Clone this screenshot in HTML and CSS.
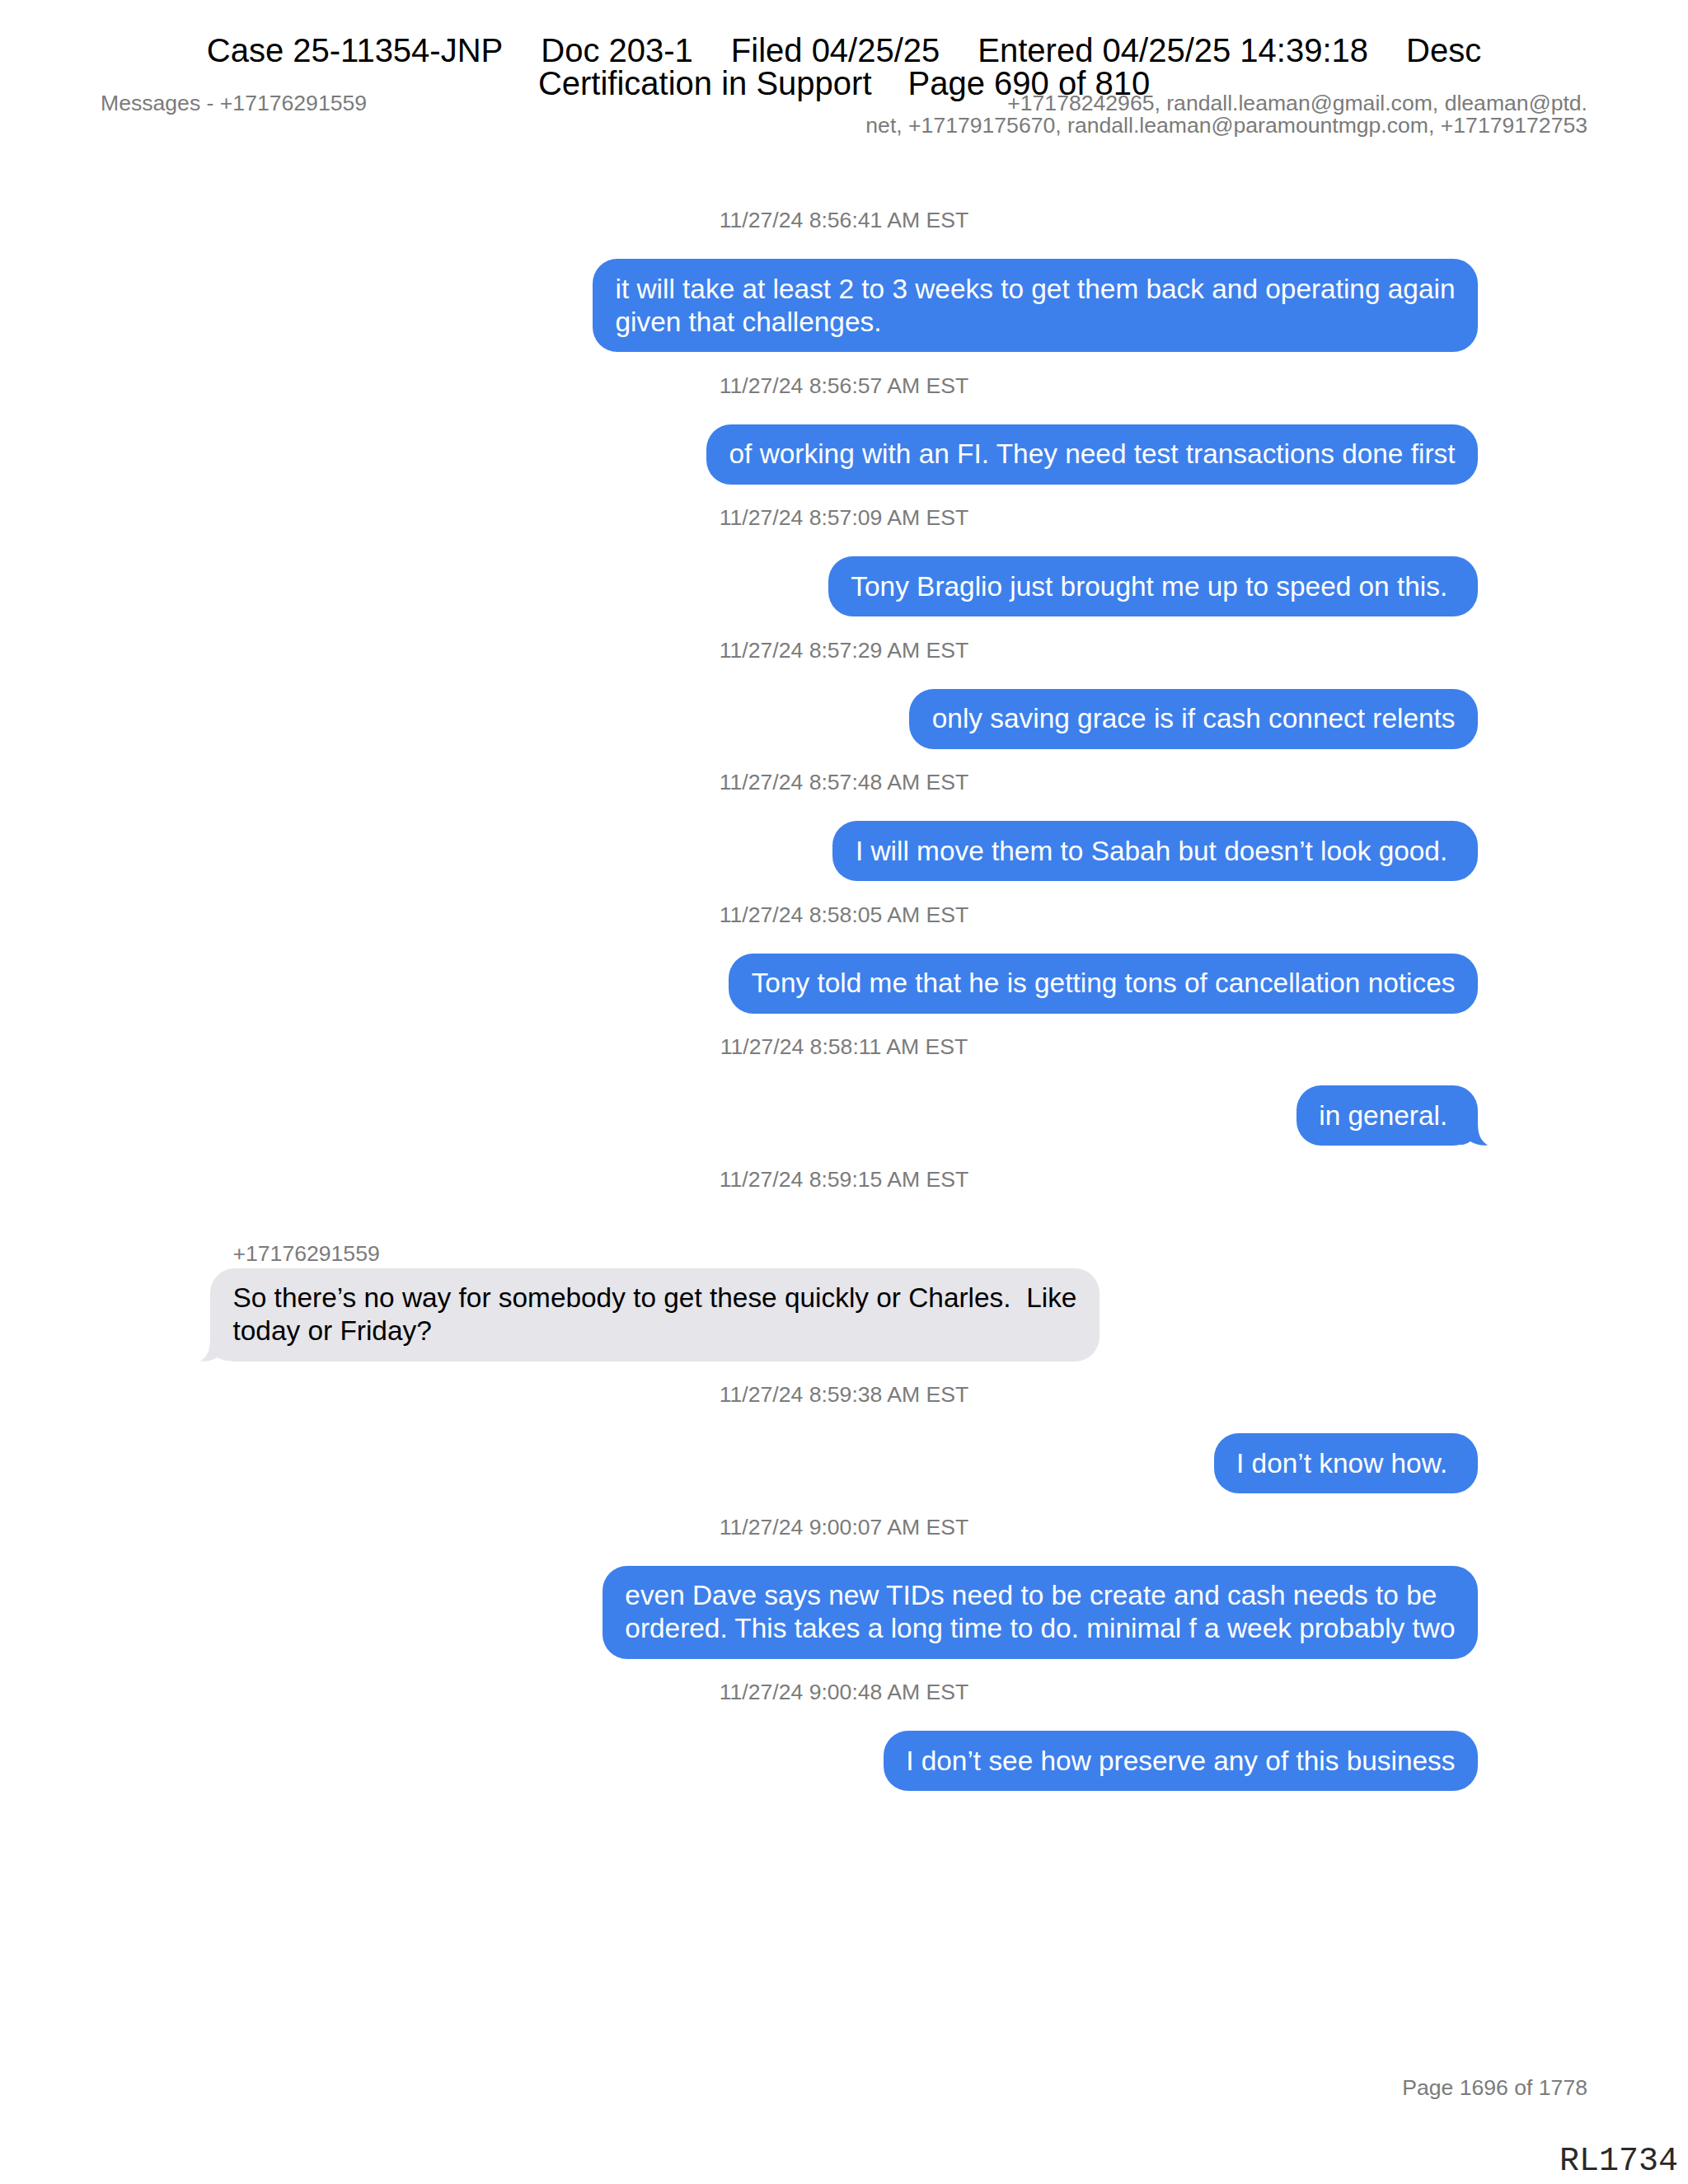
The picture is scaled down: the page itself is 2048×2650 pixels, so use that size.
FILE: index.html
```html
<!DOCTYPE html>
<html lang="en">
<head>
<meta charset="utf-8">
<title>Messages - +17176291559</title>
<link rel="stylesheet" href="styles.css">
</head>
<body>
<div class="page">
  <div class="stamp">
    <div class="stamp-line"><span>Case 25-11354-JNP</span><span class="sg">Doc 203-1</span><span class="sg">Filed 04/25/25</span><span class="sg">Entered 04/25/25 14:39:18</span><span class="sg">Desc</span></div>
    <div class="stamp-line"><span>Certification in Support</span><span class="sg2">Page 690 of 810</span></div>
  </div>

  <header class="doc-head">
    <div class="head-left">Messages - +17176291559</div>
    <div class="head-right">+17178242965, randall.leaman@gmail.com, dleaman@ptd.<br>net, +17179175670, randall.leaman@paramountmgp.com, +17179172753</div>
  </header>

  <main class="chat">
    <div class="ts first">11/27/24 8:56:41 AM EST</div>
    <div class="msg sent"><div class="bubble">it will take at least 2 to 3 weeks to get them back and operating again<br>given that challenges.</div></div>

    <div class="ts">11/27/24 8:56:57 AM EST</div>
    <div class="msg sent"><div class="bubble">of working with an FI. They need test transactions done first</div></div>

    <div class="ts">11/27/24 8:57:09 AM EST</div>
    <div class="msg sent"><div class="bubble">Tony Braglio just brought me up to speed on this.&nbsp;</div></div>

    <div class="ts">11/27/24 8:57:29 AM EST</div>
    <div class="msg sent"><div class="bubble">only saving grace is if cash connect relents</div></div>

    <div class="ts">11/27/24 8:57:48 AM EST</div>
    <div class="msg sent"><div class="bubble">I will move them to Sabah but doesn’t look good.&nbsp;</div></div>

    <div class="ts">11/27/24 8:58:05 AM EST</div>
    <div class="msg sent"><div class="bubble">Tony told me that he is getting tons of cancellation notices</div></div>

    <div class="ts">11/27/24 8:58:11 AM EST</div>
    <div class="msg sent"><div class="bubble tailed">in general.&nbsp;<svg class="tail tail-right" width="34" height="40" viewBox="0 0 34 40"><path d="M0 0H22V12C22 26 25 34 34 39.5C27 40.5 19 38.5 13 35C9 37.5 5 39 0 39Z"/></svg></div></div>

    <div class="ts">11/27/24 8:59:15 AM EST</div>
    <div class="sender">+17176291559</div>
    <div class="msg received"><div class="bubble tailed">So there’s no way for somebody to get these quickly or Charles.&nbsp; Like<br>today or Friday?<svg class="tail tail-left" width="34" height="40" viewBox="0 0 34 40"><path d="M0 0H22V12C22 26 25 34 34 39.5C27 40.5 19 38.5 13 35C9 37.5 5 39 0 39Z"/></svg></div></div>

    <div class="ts">11/27/24 8:59:38 AM EST</div>
    <div class="msg sent"><div class="bubble">I don’t know how.&nbsp;</div></div>

    <div class="ts">11/27/24 9:00:07 AM EST</div>
    <div class="msg sent"><div class="bubble">even Dave says new TIDs need to be create and cash needs to be<br>ordered. This takes a long time to do. minimal f a week probably two</div></div>

    <div class="ts">11/27/24 9:00:48 AM EST</div>
    <div class="msg sent"><div class="bubble">I don’t see how preserve any of this business</div></div>
  </main>

  <footer class="doc-foot">
    <div class="page-num">Page 1696 of 1778</div>
    <div class="bates">RL1734</div>
  </footer>
</div>
</body>
</html>
```

FILE: styles.css
```css
html, body {
  margin: 0;
  padding: 0;
  background: #ffffff;
}

body {
  font-family: "Liberation Sans", Arial, Helvetica, sans-serif;
  color: #000000;
}

.page {
  position: relative;
  width: 2048px;
  height: 2650px;
  display: flex;
  flex-direction: column;
  overflow: hidden;
}

/* Court filing stamp that lies over the page */
.stamp {
  position: absolute;
  top: 41px;
  left: 0;
  right: 0;
  text-align: center;
  font-size: 40px;
  line-height: 40px;
  color: #000000;
  white-space: nowrap;
  z-index: 2;
}

.stamp-line .sg {
  margin-left: 46px;
}

.stamp-line .sg2 {
  margin-left: 44px;
}

/* Document header */
.doc-head {
  display: flex;
  justify-content: space-between;
  align-items: flex-start;
  padding: 112px 122px 0 122px;
  font-size: 26.6px;
  line-height: 27px;
  color: #7b7b7b;
}

.head-right {
  text-align: right;
  white-space: nowrap;
}

/* Conversation */
.chat {
  display: flex;
  flex-direction: column;
  margin: 86px 255px 0 255px;
}

.ts {
  font-size: 26.6px;
  line-height: 30px;
  color: #7b7b7b;
  text-align: center;
  margin-top: 25.5px;
}

.ts.first {
  margin-top: 0;
}

.sender {
  font-size: 26.6px;
  line-height: 30px;
  color: #7b7b7b;
  margin-top: 60px;
  padding-left: 27.5px;
}

.msg {
  display: flex;
  margin-top: 32px;
}

.sender + .msg {
  margin-top: 3px;
}

.msg.sent {
  justify-content: flex-end;
}

.msg.received {
  justify-content: flex-start;
}

.bubble {
  position: relative;
  max-width: 70%;
  padding: 16.5px 27.5px;
  border-radius: 30px;
  font-size: 33.4px;
  line-height: 40px;
  white-space: nowrap;
}

.sent .bubble {
  background: #3d80ec;
  color: #ffffff;
}

.received .bubble {
  background: #e5e5ea;
  color: #000000;
}

.tail {
  position: absolute;
  bottom: 0;
  display: block;
}

.tail-right {
  right: -12px;
  fill: #3d80ec;
}

.tail-left {
  left: -12px;
  fill: #e5e5ea;
  transform: scaleX(-1);
}

/* Footer */
.doc-foot {
  margin-top: auto;
  display: flex;
  flex-direction: column;
  padding-bottom: 4px;
}

.page-num {
  font-size: 26.6px;
  line-height: 30px;
  color: #7b7b7b;
  text-align: right;
  padding-right: 122px;
}

.bates {
  margin-top: 52px;
  font-family: "Liberation Mono", "Courier New", monospace;
  font-size: 40px;
  line-height: 46px;
  color: #2a2a2a;
  text-align: right;
  padding-right: 12px;
}
```
